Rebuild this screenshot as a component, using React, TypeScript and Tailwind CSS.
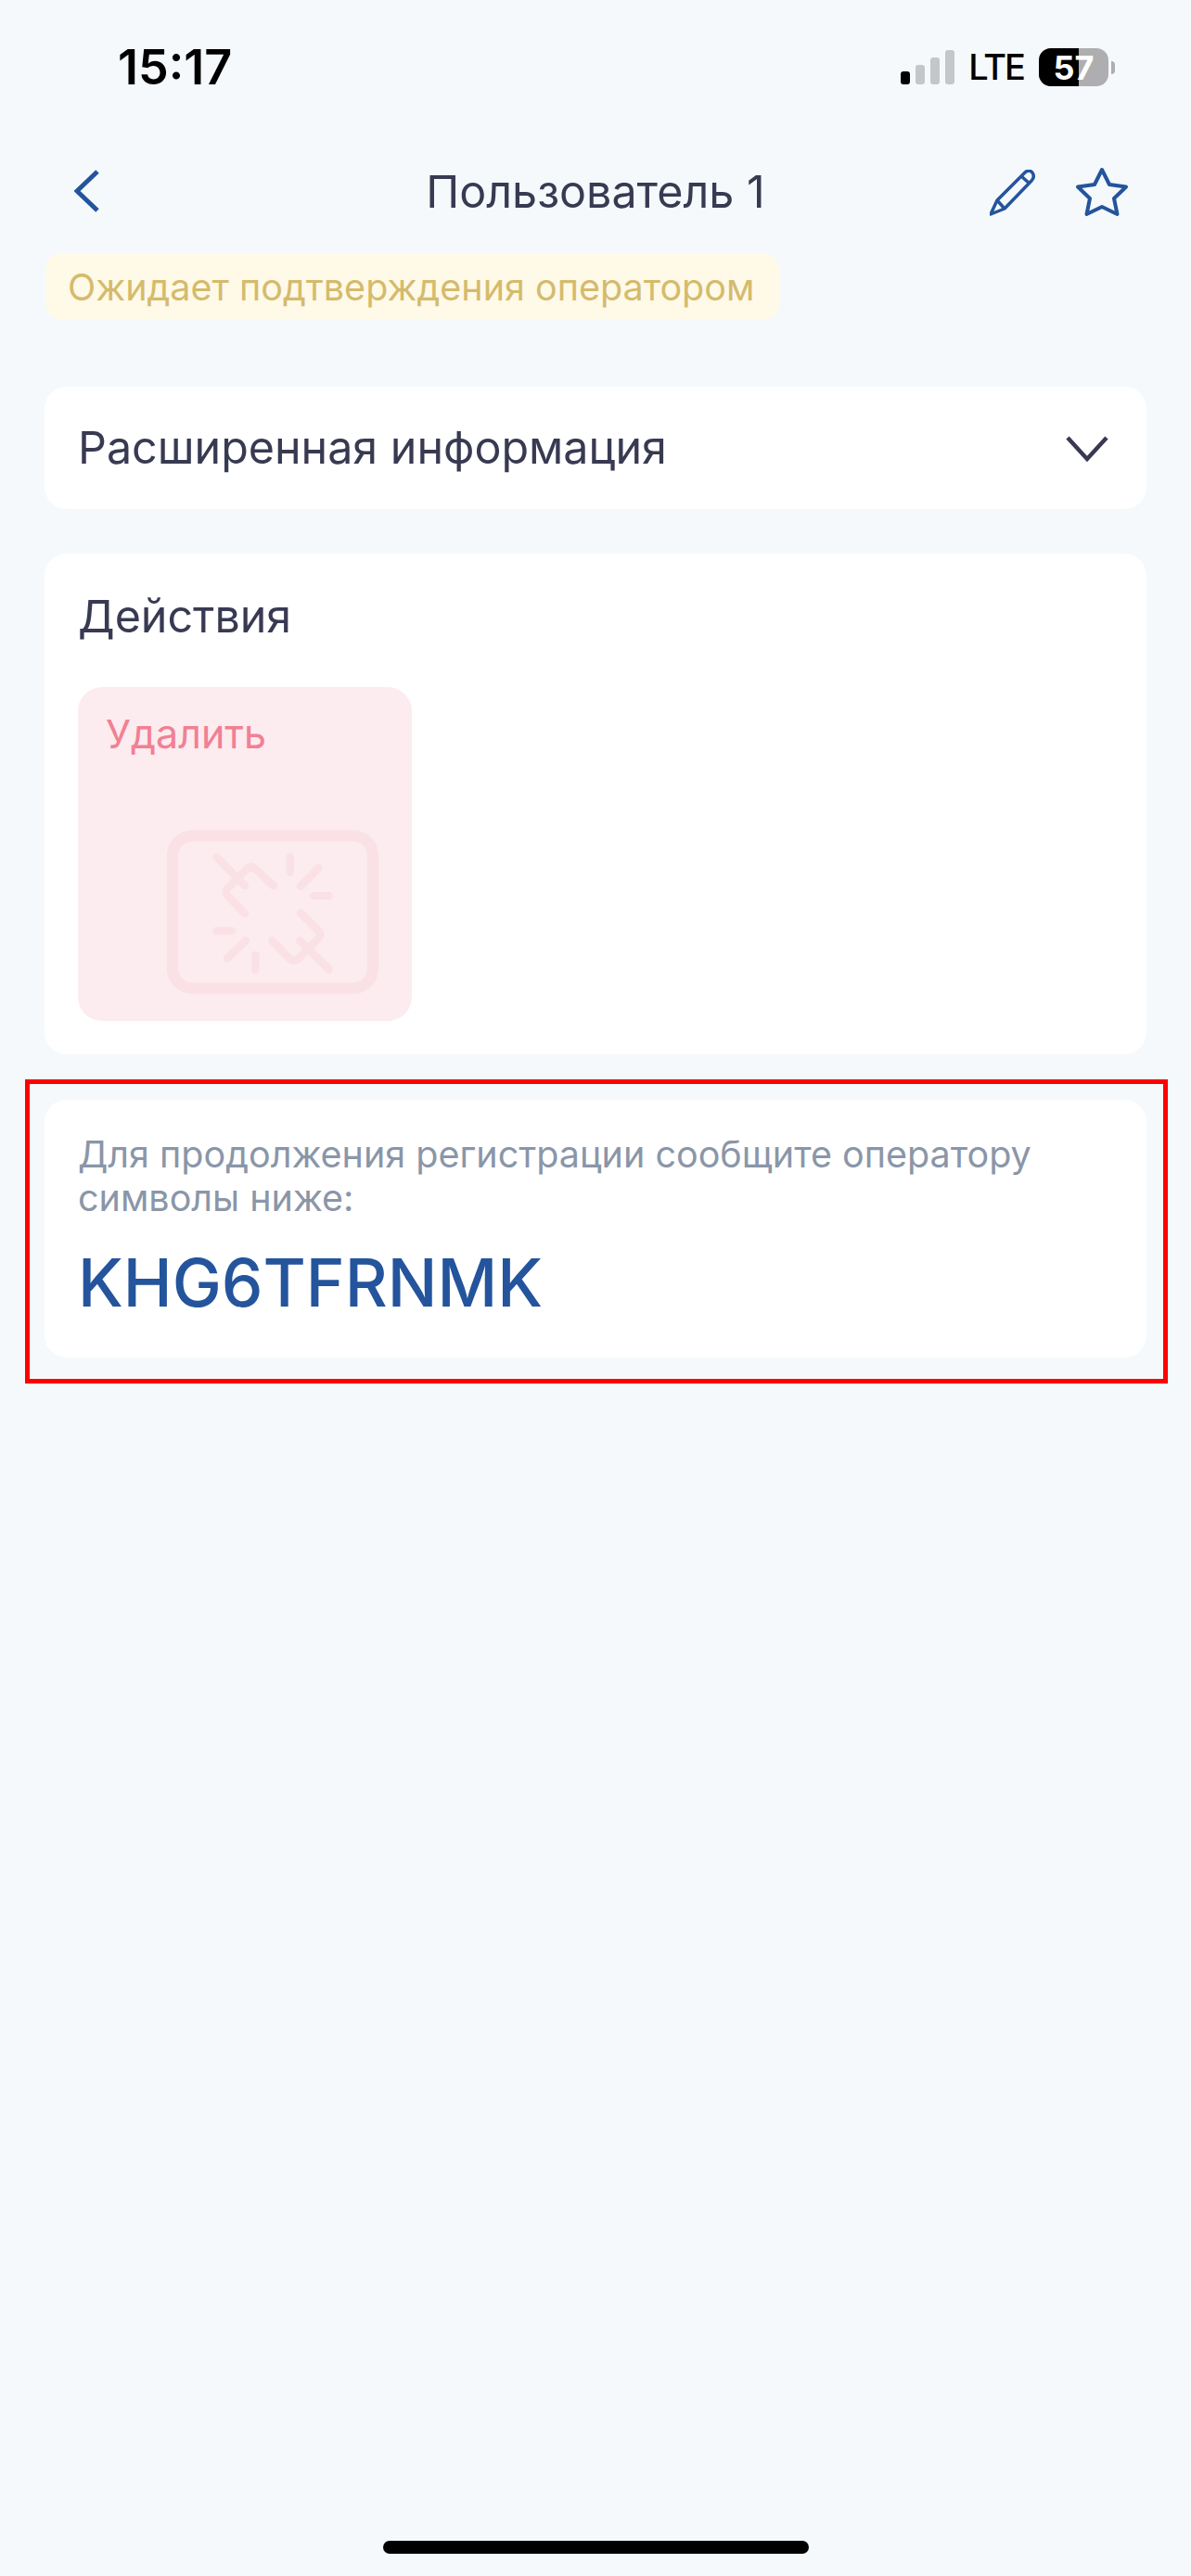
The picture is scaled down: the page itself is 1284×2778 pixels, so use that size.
const BLUE = '#24549c'

const StatusBar = () => (
  <div className="flex h-[160px] items-start justify-between pl-[127px] pr-[82px] pt-[45px]">
    <span className="text-[52px] leading-[56px] font-semibold text-black">15:17</span>
    <div className="flex items-center pt-[7px]">
      <div className="flex h-[41px] items-end gap-[6px] pb-[2px]">
        <div className="h-[14px] w-[10px] rounded-[3px] bg-black" />
        <div className="h-[21px] w-[10px] rounded-[3px] bg-[#c5c6c9]" />
        <div className="h-[29px] w-[10px] rounded-[3px] bg-[#c5c6c9]" />
        <div className="h-[37px] w-[10px] rounded-[3px] bg-[#c5c6c9]" />
      </div>
      <span className="ml-[15px] text-[38px] leading-[41px] font-medium tracking-[-2px] text-black">LTE</span>
      <div className="relative ml-[16px] flex h-[41px] w-[75px] overflow-hidden rounded-[13px] bg-[#aeaeb0]">
        <div className="h-full w-[43px] bg-black" />
        <span className="absolute inset-0 flex items-center justify-center text-[36px] leading-none font-bold text-white">57</span>
      </div>
      <div className="ml-[3px] h-[14px] w-[4px] rounded-r-full bg-[#aeaeb0]" />
    </div>
  </div>
)

const Header = () => (
  <div className="relative flex h-[90px] items-center justify-center">
    <svg width="28" height="46" viewBox="0 0 28 46" fill="none" className="absolute left-[80px] top-[23px]">
      <path d="M25 2 L3 23 L25 44" stroke={BLUE} strokeWidth="5" />
    </svg>
    <h1 className="mt-[4px] text-[48.400px] leading-[56px] font-normal text-[#383a52]">Пользователь 1</h1>
    <svg width="50" height="50" viewBox="0 0 50 50" fill="none" className="absolute left-[1067px] top-[23px]">
      <path
        d="M1 48 L8 33 L38 3 C41 0 45 1 46.500 4 C48 7 47 10 45 12 L16 42 Z M8 33 L16 42 M34 7 L43 15"
        stroke={BLUE}
        strokeWidth="3.500"
        strokeLinejoin="round"
      />
    </svg>
    <svg width="58" height="54" viewBox="0 0 58 54" fill="none" className="absolute left-[1159px] top-[20px]">
      <path
        d="M29 3 L37 19 L55 21.500 L42 34 L45.500 51 L29 43 L12.500 51 L16 34 L3 21.500 L21 19 Z"
        stroke={BLUE}
        strokeWidth="4"
        strokeLinejoin="round"
      />
    </svg>
  </div>
)

const BrokenLinkIcon = () => (
  <svg
    width="228"
    height="177"
    viewBox="360 522 684 530"
    fill="none"
    stroke="#f9e1e6"
    strokeLinecap="round"
    className="absolute bottom-[29px] right-[36px]"
  >
    <rect x="378" y="540" width="648" height="494" rx="65" strokeWidth="36" />
    <g strokeWidth="25">
      <path d="M521 610 L612 702" />
      <path d="M612 792 L556 735 Q546 723 556 711 L620 646 Q632 636 644 646 L704 702" />
      <path d="M758 610 V658" />
      <path d="M792 704 L850 644" />
      <path d="M835 735 H884" />
      <path d="M792 790 L850 848 Q860 860 850 872 L785 938 Q771 950 757 938 L700 880" />
      <path d="M790 880 L884 973" />
      <path d="M520 848 H570" />
      <path d="M555 938 L614 880" />
      <path d="M646 926 V973" />
    </g>
  </svg>
)

export default function App() {
  return (
    <div className="flex h-[2778px] flex-col bg-[#f5f9fc] font-[Inter,sans-serif]">
      <StatusBar />
      <Header />

      <div className="ml-[49px] mt-[23px] flex h-[72px] w-[791px] items-center rounded-[18px] bg-[#fff9e8] pl-[24px] pt-[2px]">
        <span className="text-[39.500px] leading-[48px] text-[#d4bb6c]">Ожидает подтверждения оператором</span>
      </div>

      <div className="mx-[48px] mt-[72px] flex h-[132px] items-center justify-between rounded-[24px] bg-white pl-[36px] pr-[41px]">
        <span className="text-[48.400px] leading-[56px] font-normal text-[#383a52]">Расширенная информация</span>
        <svg width="46" height="30" viewBox="0 0 46 30" fill="none" className="mt-[2px]">
          <path d="M2 3 L23 26 L44 3" stroke="#383a52" strokeWidth="4.500" />
        </svg>
      </div>

      <div className="mx-[48px] mt-[48px] rounded-[24px] bg-white px-[36px] pb-[36px] pt-[33px]">
        <div className="mb-[41px] text-[48.400px] leading-[70px] font-normal text-[#383a52]">Действия</div>
        <div className="relative h-[360px] w-[360px] rounded-[26px] bg-[#fcebef] pl-[30px] pt-[25px]">
          <span className="text-[43px] leading-[50px] text-[#f18093]">Удалить</span>
          <BrokenLinkIcon />
        </div>
      </div>

      <div className="ml-[27px] mr-[25px] mt-[27px] border-[5px] border-[#ff0000] pb-[23px] pl-[16px] pr-[18px] pt-[17px]">
        <div className="h-[278px] rounded-[24px] bg-white pl-[36px] pr-[30px] pt-[36px]">
          <p className="text-[39.500px] leading-[47px] text-[#8a96a8]">
            Для продолжения регистрации сообщите оператору символы ниже:
          </p>
          <p className="mt-[23px] text-[71px] leading-[88px] font-medium text-[#24549c]">KHG6TFRNMK</p>
        </div>
      </div>

      <div className="mx-auto mb-[24px] mt-auto h-[14px] w-[459px] rounded-full bg-black" />
    </div>
  )
}
